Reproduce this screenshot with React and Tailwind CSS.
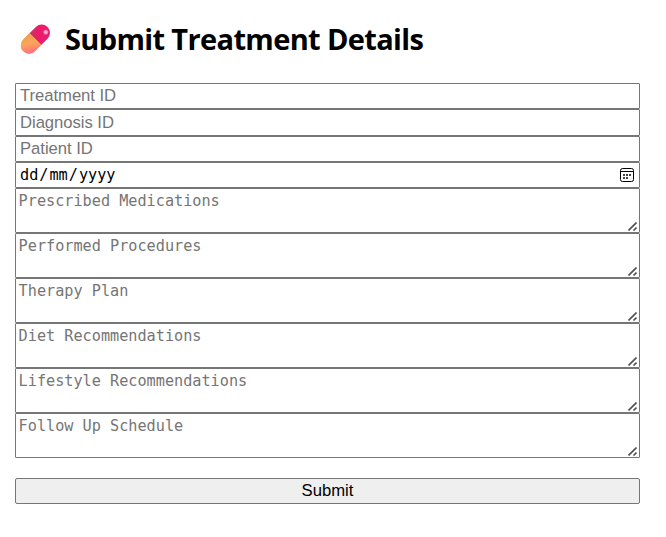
const textFields = [
  { label: 'Treatment ID', height: 'h-[26px]' },
  { label: 'Diagnosis ID', height: 'h-[27px]' },
  { label: 'Patient ID', height: 'h-[26px]' },
];

const notes = [
  'Prescribed Medications',
  'Performed Procedures',
  'Therapy Plan',
  'Diet Recommendations',
  'Lifestyle Recommendations',
  'Follow Up Schedule',
];

function Pill() {
  return (
    <svg width="32" height="32" viewBox="0 0 32 32" aria-hidden="true">
      <defs>
        <linearGradient id="pink" x1="0" y1="0" x2="1" y2="1">
          <stop offset="0" stopColor="#c83460" />
          <stop offset="0.45" stopColor="#f0186c" />
          <stop offset="1" stopColor="#d82874" />
        </linearGradient>
        <linearGradient id="orange" x1="0" y1="0" x2="0.2" y2="1">
          <stop offset="0" stopColor="#ea9c55" />
          <stop offset="0.55" stopColor="#fba658" />
          <stop offset="1" stopColor="#ff7086" />
        </linearGradient>
        <radialGradient id="shine">
          <stop offset="0" stopColor="#ffd0e4" />
          <stop offset="0.5" stopColor="#ff9cc4" />
          <stop offset="1" stopColor="#ff79b0" stopOpacity="0" />
        </radialGradient>
      </defs>
      <g transform="rotate(-45 16.4 16.2)">
        <path d="M16.4 7.9H25.3A8.3 8.3 0 0 1 25.3 24.5H16.4Z" fill="url(#pink)" />
        <path d="M16.4 7.9H7.5A8.3 8.3 0 0 0 7.5 24.5H16.4Z" fill="#fba658" />
      </g>
      <path d="M10.53 10.33 4.24 16.62A8.3 8.3 0 0 0 15.98 28.36L22.27 22.07Z" fill="url(#orange)" />
      <circle cx="26.8" cy="9.2" r="3" fill="url(#shine)" />
    </svg>
  );
}

function CalendarIcon() {
  return (
    <svg width="14" height="14" viewBox="0 0 14 14" aria-hidden="true">
      <rect x="0.5" y="0.5" width="13" height="13" rx="2" fill="none" stroke="#000" />
      <path d="M1 3.5h12" stroke="#000" />
      <path d="M3 6h2v2H3zM6 6h2v2H6zM9 6h2v2H9zM3 9h2v2H3zM6 9h2v2H6z" fill="#444" />
    </svg>
  );
}

function Grip() {
  return (
    <svg className="absolute right-[3px] bottom-[2px]" width="9" height="9" viewBox="0 0 9 9" aria-hidden="true">
      <path d="M0.5 8.5 8.5 0.5M5.5 8.5 8.5 5.5" stroke="#505050" strokeWidth="1.6" />
    </svg>
  );
}

export default function App() {
  return (
    <main className="h-[537px] w-[666px] bg-white pt-[18px] pl-[15px] text-black">
      <h1 className="flex h-[42px] items-center font-['Open_Sans',sans-serif] text-[29px] leading-[42px] font-bold tracking-[-0.64px] whitespace-nowrap">
        <span className="ml-[4px] w-[46px]"><Pill /></span>
        Submit Treatment Details
      </h1>
      <form className="mt-[23px] flex w-[625px] flex-col">
        {textFields.map(({ label, height }) => (
          <input
            key={label}
            placeholder={label}
            className={`${height} w-full rounded-[1px] border border-[#767676] bg-white px-[4px] font-['Liberation_Sans',sans-serif] text-[16.67px] tracking-[-0.04px] placeholder:text-[#757575]`}
          />
        ))}
        <div className="flex h-[26px] items-center justify-between rounded-[1px] border border-[#767676] pr-[5px] pl-[4px] font-['DejaVu_Sans_Mono',monospace] text-[15.2px] leading-[24px]">
          <span className="flex"><span>dd</span><span className="mx-[1px]">/</span><span>mm</span><span className="mx-[1px]">/</span><span>yyyy</span></span>
          <CalendarIcon />
        </div>
        {notes.map((label) => (
          <div key={label} className="relative h-[45px]">
            <textarea
              placeholder={label}
              className="block h-full w-full resize-none overflow-hidden rounded-[1px] border border-[#767676] bg-white px-[2.6px] py-[2px] font-['DejaVu_Sans_Mono',monospace] text-[15.2px] leading-[20px] placeholder:text-[#757575]"
            />
            <Grip />
          </div>
        ))}
        <button
          type="button"
          className="mt-[20px] h-[26px] w-full rounded-[2px] border border-[#767676] bg-[#efefef] font-['Liberation_Sans',sans-serif] text-[16.67px] leading-[24px]"
        >
          Submit
        </button>
      </form>
    </main>
  );
}
